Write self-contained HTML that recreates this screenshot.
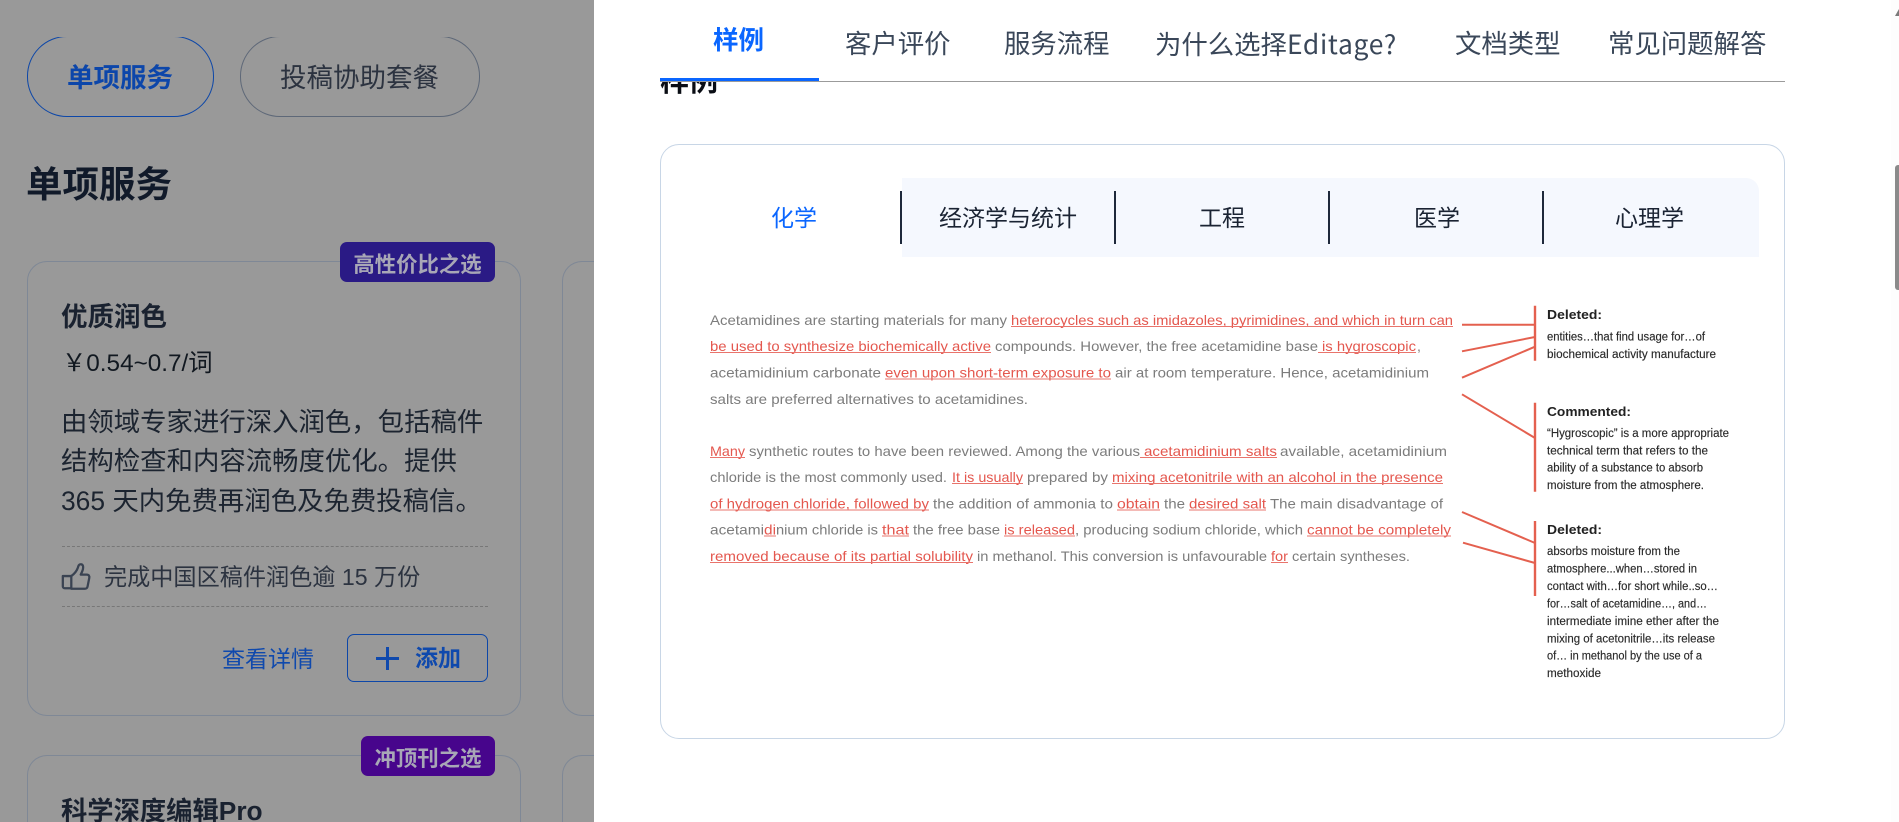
<!DOCTYPE html>
<html lang="zh-CN"><head><meta charset="utf-8"><title>样例</title>
<style>
html,body{margin:0;padding:0;width:1899px;height:822px;overflow:hidden;background:#fff}
body{position:relative;font-family:"Liberation Sans","Noto Sans CJK SC",sans-serif}
.a{position:absolute;white-space:nowrap;line-height:1}
.left{position:absolute;left:0;top:0;width:594px;height:822px;background:#999;overflow:hidden}
.card{position:absolute;box-sizing:border-box;border:1px solid #7f8896;border-radius:20px}
.dash{position:absolute;left:62px;width:426px;border-top:1px dashed #777}
.badge{position:absolute;height:40px;border-radius:7px;color:#a8a7b6;font-weight:700;font-size:21.400px;line-height:46px;text-align:center;white-space:nowrap;overflow:hidden}
.nav{position:absolute;font-size:26.400px;line-height:1;color:#3a4759;white-space:nowrap}
.tab{position:absolute;top:207px;font-size:23px;line-height:1;color:#1a2333;white-space:nowrap}
.div{position:absolute;top:191px;width:2px;height:53px;background:#1e293b}
svg text{font-family:"Liberation Sans",sans-serif}
.g{fill:#7c7c7c;font-size:14px}
.r{fill:#e4574e;font-size:14px}
.h{fill:#222;font-size:13px;font-weight:700}
.n{fill:#2a2a2a;font-size:11.500px;stroke:#2a2a2a;stroke-width:.15px}
</style></head><body>

<div class="left">
  <div style="position:absolute;left:0;top:37px;width:594px;height:90px;overflow:hidden">
    <div style="position:absolute;left:27px;top:-1px;width:187px;height:81px;box-sizing:border-box;border:1px solid #0d47a8;border-radius:40px"></div>
    <div style="position:absolute;left:240px;top:-1px;width:240px;height:81px;box-sizing:border-box;border:1px solid #5e6878;border-radius:40px"></div>
  </div>
  <div class="a" style="left:67px;top:65px;font-size:26.500px;font-weight:700;color:#0c46aa">单项服务</div>
  <div class="a" style="left:280px;top:65px;font-size:26.500px;color:#2c3340">投稿协助套餐</div>
  <div class="a" style="left:26px;top:167px;font-size:36.500px;font-weight:700;color:#111a2a">单项服务</div>

  <div class="card" style="left:27px;top:261px;width:494px;height:455px"></div>
  <div class="card" style="left:562px;top:261px;width:32px;height:455px;border-right:0;border-radius:20px 0 0 20px"></div>
  <div class="card" style="left:27px;top:755px;width:494px;height:67px;border-bottom:0;border-radius:20px 20px 0 0"></div>
  <div class="card" style="left:562px;top:755px;width:32px;height:67px;border-right:0;border-bottom:0;border-radius:20px 0 0 0"></div>

  <div class="badge" style="left:340px;top:242px;width:155px;background:#2a1a85">高性价比之选</div>
  <div class="badge" style="left:361px;top:736px;width:134px;background:#47058c">冲顶刊之选</div>

  <div class="a" style="left:61px;top:304px;font-size:26.500px;font-weight:700;color:#1a2230">优质润色</div>
  <div class="a" style="left:62px;top:352px;font-size:24.300px;color:#111820">￥0.54~0.7/词</div>
  <div class="a" style="left:61px;top:409px;font-size:26.400px;color:#1c2430">由领域专家进行深入润色，包括稿件</div>
  <div class="a" style="left:61px;top:448px;font-size:26.400px;color:#1c2430">结构检查和内容流畅度优化。提供</div>
  <div class="a" style="left:61px;top:488px;font-size:26.400px;color:#1c2430">365 天内免费再润色及免费投稿信。</div>
  <div class="dash" style="top:546px"></div>
  <svg style="position:absolute;left:60px;top:561px" width="32" height="32" viewBox="0 0 34 32" fill="none" stroke="#3a4352" stroke-width="2.400" stroke-linejoin="round" stroke-linecap="round">
    <path d="M3 15h9v13H5a2 2 0 0 1-2-2z"/>
    <path d="M12 15c4-3 6-6 7-9 .6-2 1-3.500 3-3.500 2.500 0 3 2.500 2.400 5-.4 2-1.400 4-2.400 6h6.500c2 0 3 1.500 2.600 3.500l-1.800 9c-.3 1.500-1.300 2.500-3 2.500H12"/>
  </svg>
  <div class="a" style="left:104px;top:566px;font-size:23.150px;color:#2c3340">完成中国区稿件润色逾 15 万份</div>
  <div class="dash" style="top:606px"></div>
  <div class="a" style="left:222px;top:648px;font-size:23px;color:#0f49ad">查看详情</div>
  <div style="position:absolute;left:347px;top:634px;width:141px;height:48px;box-sizing:border-box;border:1px solid #0d47a8;border-radius:7px"></div>
  <svg style="position:absolute;left:376px;top:647px" width="23" height="23"><path d="M0 11.500h23M11.500 0v23" stroke="#0f49ad" stroke-width="3"/></svg>
  <div class="a" style="left:415px;top:647px;font-size:23px;font-weight:700;color:#0f49ad">添加</div>
  <div class="a" style="left:61px;top:799px;height:23px;line-height:24px;font-size:26.300px;font-weight:700;color:#1a2230">科学深度编辑Pro</div>
</div>

<!-- clipped heading under the sticky nav -->
<div style="position:absolute;left:660px;top:81px;width:70px;height:16px;overflow:hidden">
  <div class="a" style="left:0;top:-13px;font-size:29px;font-weight:700;color:#0a0d14">样例</div>
</div>

<!-- top nav -->
<div class="a" style="left:713px;top:29px;font-size:25.500px;font-weight:700;color:#0a66ff">样例</div>
<div class="nav" style="left:845px;top:31px">客户评价</div>
<div class="nav" style="left:1004px;top:31px">服务流程</div>
<div class="nav" style="left:1155px;top:30px">为什么选择<span style="font-family:'Noto Sans CJK SC',sans-serif;letter-spacing:.7px">Editage?</span></div>
<div class="nav" style="left:1455px;top:31px">文档类型</div>
<div class="nav" style="left:1608px;top:31px">常见问题解答</div>
<div style="position:absolute;left:660px;top:81px;width:1125px;height:1px;background:#9b9b9b"></div>
<div style="position:absolute;left:660px;top:78px;width:159px;height:3px;background:#0a66ff"></div>

<!-- sample card -->
<div style="position:absolute;left:660px;top:144px;width:1125px;height:595px;box-sizing:border-box;border:1px solid #c8d6e6;border-radius:19px"></div>
<div style="position:absolute;left:902px;top:178px;width:857px;height:79px;background:#f5f8fe;border-top-right-radius:13px"></div>
<div class="div" style="left:900px"></div>
<div class="div" style="left:1114px"></div>
<div class="div" style="left:1328px"></div>
<div class="div" style="left:1542px"></div>
<div class="tab" style="left:771px;color:#0a66ff">化学</div>
<div class="tab" style="left:939px">经济学与统计</div>
<div class="tab" style="left:1199px">工程</div>
<div class="tab" style="left:1414px">医学</div>
<div class="tab" style="left:1615px">心理学</div>

<svg style="position:absolute;left:0;top:0" width="1899" height="822" viewBox="0 0 1899 822">
  <g style="filter:blur(.25px)">
  <!-- line 1 -->
  <text class="g" x="710" y="325" textLength="297" lengthAdjust="spacingAndGlyphs">Acetamidines are starting materials for many</text>
  <text class="r" x="1011" y="325" textLength="442" lengthAdjust="spacingAndGlyphs">heterocycles such as imidazoles, pyrimidines, and which in turn can</text>
  <!-- line 2 -->
  <text class="r" x="710" y="351" textLength="281" lengthAdjust="spacingAndGlyphs">be used to synthesize biochemically active</text>
  <text class="g" x="995" y="351" textLength="323" lengthAdjust="spacingAndGlyphs">compounds. However, the free acetamidine base</text>
  <text class="r" x="1322" y="351" textLength="94" lengthAdjust="spacingAndGlyphs">is hygroscopic</text>
  <text class="g" x="1417" y="351">,</text>
  <!-- line 3 -->
  <text class="g" x="710" y="377.500" textLength="171" lengthAdjust="spacingAndGlyphs">acetamidinium carbonate</text>
  <text class="r" x="885" y="377.500" textLength="226" lengthAdjust="spacingAndGlyphs">even upon short-term exposure to</text>
  <text class="g" x="1115" y="377.500" textLength="314" lengthAdjust="spacingAndGlyphs">air at room temperature. Hence, acetamidinium</text>
  <!-- line 4 -->
  <text class="g" x="710" y="404" textLength="318" lengthAdjust="spacingAndGlyphs">salts are preferred alternatives to acetamidines.</text>
  <!-- line 5 -->
  <text class="r" x="710" y="456" textLength="35" lengthAdjust="spacingAndGlyphs">Many</text>
  <text class="g" x="749" y="456" textLength="391" lengthAdjust="spacingAndGlyphs">synthetic routes to have been reviewed. Among the various</text>
  <text class="r" x="1144" y="456" textLength="133" lengthAdjust="spacingAndGlyphs">acetamidinium salts</text>
  <text class="g" x="1280" y="456" textLength="167" lengthAdjust="spacingAndGlyphs">available, acetamidinium</text>
  <!-- line 6 -->
  <text class="g" x="710" y="482" textLength="237" lengthAdjust="spacingAndGlyphs">chloride is the most commonly used.</text>
  <text class="r" x="952" y="482" textLength="71" lengthAdjust="spacingAndGlyphs">It is usually</text>
  <text class="g" x="1027" y="482" textLength="81" lengthAdjust="spacingAndGlyphs">prepared by</text>
  <text class="r" x="1112" y="482" textLength="331" lengthAdjust="spacingAndGlyphs">mixing acetonitrile with an alcohol in the presence</text>
  <!-- line 7 -->
  <text class="r" x="710" y="508.500" textLength="219" lengthAdjust="spacingAndGlyphs">of hydrogen chloride, followed by</text>
  <text class="g" x="933" y="508.500" textLength="180" lengthAdjust="spacingAndGlyphs">the addition of ammonia to</text>
  <text class="r" x="1117" y="508.500" textLength="43" lengthAdjust="spacingAndGlyphs">obtain</text>
  <text class="g" x="1164" y="508.500" textLength="21" lengthAdjust="spacingAndGlyphs">the</text>
  <text class="r" x="1189" y="508.500" textLength="77" lengthAdjust="spacingAndGlyphs">desired salt</text>
  <text class="g" x="1270" y="508.500" textLength="173" lengthAdjust="spacingAndGlyphs">The main disadvantage of</text>
  <!-- line 8 -->
  <text class="g" x="710" y="534.500" textLength="54" lengthAdjust="spacingAndGlyphs">acetami</text>
  <text class="r" x="764" y="534.500" textLength="12" lengthAdjust="spacingAndGlyphs">di</text>
  <text class="g" x="776" y="534.500" textLength="102" lengthAdjust="spacingAndGlyphs">nium chloride is</text>
  <text class="r" x="882" y="534.500" textLength="27" lengthAdjust="spacingAndGlyphs">that</text>
  <text class="g" x="913" y="534.500" textLength="87" lengthAdjust="spacingAndGlyphs">the free base</text>
  <text class="r" x="1004" y="534.500" textLength="71" lengthAdjust="spacingAndGlyphs">is released</text>
  <text class="g" x="1075" y="534.500" textLength="228" lengthAdjust="spacingAndGlyphs">, producing sodium chloride, which</text>
  <text class="r" x="1307" y="534.500" textLength="144" lengthAdjust="spacingAndGlyphs">cannot be completely</text>
  <!-- line 9 -->
  <text class="r" x="710" y="561" textLength="263" lengthAdjust="spacingAndGlyphs">removed because of its partial solubility</text>
  <text class="g" x="977" y="561" textLength="290" lengthAdjust="spacingAndGlyphs">in methanol. This conversion is unfavourable</text>
  <text class="r" x="1271" y="561" textLength="17" lengthAdjust="spacingAndGlyphs">for</text>
  <text class="g" x="1292" y="561" textLength="118" lengthAdjust="spacingAndGlyphs">certain syntheses.</text>
  <!-- underlines -->
  <g stroke="#e9746c" stroke-width="1" shape-rendering="crispEdges">
    <path d="M1011 326.500h442M710 352.500h281M1318 352.500h98M885 379h226M710 457.500h35M1140 457.500h137M952 483.500h71M1112 483.500h331M710 510h219M1117 510h43M1189 510h77M764 536h12M882 536h27M1004 536h71M1307 536h144M710 562.500h263M1271 562.500h17"/>
  </g>
  </g>
  <!-- connector lines -->
  <g stroke="#e4604f" stroke-width="2" fill="none">
    <path d="M1462 324.700H1535M1462 351.300L1535 337M1462 377.700L1535 346.700M1462 394.300L1535 438M1462 512L1535 543M1463 542.700L1535 563"/>
  </g>
  <g stroke="#e4604f" stroke-width="2.400" fill="none">
    <path d="M1535 305.700V360.700M1535 402.700V491.700M1535 521V596"/>
  </g>
  <!-- notes -->
  <g style="filter:blur(.2px)">
  <text class="h" x="1547" y="319" textLength="55" lengthAdjust="spacingAndGlyphs">Deleted:</text>
  <text class="n" x="1547" y="340.500" textLength="158" lengthAdjust="spacingAndGlyphs">entities…that find usage for…of</text>
  <text class="n" x="1547" y="358" textLength="169" lengthAdjust="spacingAndGlyphs">biochemical activity manufacture</text>
  <text class="h" x="1547" y="416" textLength="84" lengthAdjust="spacingAndGlyphs">Commented:</text>
  <text class="n" x="1547" y="437" textLength="182" lengthAdjust="spacingAndGlyphs">“Hygroscopic” is a more appropriate</text>
  <text class="n" x="1547" y="454.300" textLength="161" lengthAdjust="spacingAndGlyphs">technical term that refers to the</text>
  <text class="n" x="1547" y="471.700" textLength="156" lengthAdjust="spacingAndGlyphs">ability of a substance to absorb</text>
  <text class="n" x="1547" y="489" textLength="157" lengthAdjust="spacingAndGlyphs">moisture from the atmosphere.</text>
  <text class="h" x="1547" y="534" textLength="55" lengthAdjust="spacingAndGlyphs">Deleted:</text>
  <text class="n" x="1547" y="555" textLength="133" lengthAdjust="spacingAndGlyphs">absorbs moisture from the</text>
  <text class="n" x="1547" y="572.700" textLength="150" lengthAdjust="spacingAndGlyphs">atmosphere...when…stored in</text>
  <text class="n" x="1547" y="590" textLength="171" lengthAdjust="spacingAndGlyphs">contact with…for short while..so…</text>
  <text class="n" x="1547" y="607.300" textLength="160" lengthAdjust="spacingAndGlyphs">for…salt of acetamidine…, and…</text>
  <text class="n" x="1547" y="625" textLength="172" lengthAdjust="spacingAndGlyphs">intermediate imine ether after the</text>
  <text class="n" x="1547" y="642.300" textLength="168" lengthAdjust="spacingAndGlyphs">mixing of acetonitrile…its release</text>
  <text class="n" x="1547" y="659.700" textLength="155" lengthAdjust="spacingAndGlyphs">of… in methanol by the use of a</text>
  <text class="n" x="1547" y="677" textLength="54" lengthAdjust="spacingAndGlyphs">methoxide</text>
  </g>
</svg>

<!-- scrollbar -->
<div style="position:absolute;left:1891px;top:0;width:8px;height:822px;background:#fdfdfd"></div>
<div style="position:absolute;left:1895px;top:165px;width:4px;height:125px;background:#8a8a8a;border-radius:3px 0 0 3px"></div>
<svg style="position:absolute;left:1895px;top:9px" width="4" height="8"><path d="M0 7L4 0V7Z" fill="#7a7a7a"/></svg>
</body></html>
